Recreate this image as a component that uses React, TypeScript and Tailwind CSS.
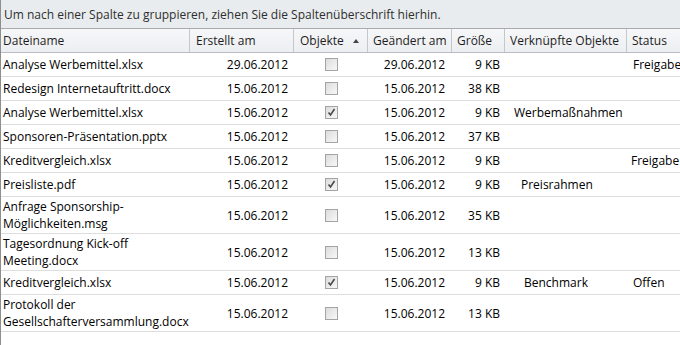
import React from 'react';

type Row = {
  name: string[];
  created: string;
  checked: boolean;
  changed: string;
  size: string;
  linked?: string;
  linkedPad?: string;
  status?: string;
  statusPad?: string;
};

const rows: Row[] = [
  { name: ['Analyse Werbemittel.xlsx'], created: '29.06.2012', checked: false, changed: '29.06.2012', size: '9 KB', status: 'Freigabe', statusPad: 'pl-[6px]' },
  { name: ['Redesign Internetauftritt.docx'], created: '15.06.2012', checked: false, changed: '15.06.2012', size: '38 KB' },
  { name: ['Analyse Werbemittel.xlsx'], created: '15.06.2012', checked: true, changed: '15.06.2012', size: '9 KB', linked: 'Werbemaßnahmen', linkedPad: 'pl-[9px]' },
  { name: ['Sponsoren-Präsentation.pptx'], created: '15.06.2012', checked: false, changed: '15.06.2012', size: '37 KB' },
  { name: ['Kreditvergleich.xlsx'], created: '15.06.2012', checked: false, changed: '15.06.2012', size: '9 KB', status: 'Freigabe', statusPad: 'pl-[4px]' },
  { name: ['Preisliste.pdf'], created: '15.06.2012', checked: true, changed: '15.06.2012', size: '9 KB', linked: 'Preisrahmen', linkedPad: 'pl-[16px]' },
  { name: ['Anfrage Sponsorship-', 'Möglichkeiten.msg'], created: '15.06.2012', checked: false, changed: '15.06.2012', size: '35 KB' },
  { name: ['Tagesordnung Kick-off', 'Meeting.docx'], created: '15.06.2012', checked: false, changed: '15.06.2012', size: '13 KB' },
  { name: ['Kreditvergleich.xlsx'], created: '15.06.2012', checked: true, changed: '15.06.2012', size: '9 KB', linked: 'Benchmark', linkedPad: 'pl-[19px]', status: 'Offen', statusPad: 'pl-[6px]' },
  { name: ['Protokoll der', 'Gesellschafterversammlung.docx'], created: '15.06.2012', checked: false, changed: '15.06.2012', size: '13 KB' },
];

const cols = 'grid grid-cols-[189px_104px_74px_84px_53px_122px_1fr]';

function CheckBox({ checked }: { checked: boolean }) {
  return (
    <div className="w-[13px] h-[13px] border border-[#a4a4a4] bg-gradient-to-br from-[#dcdcdc] to-[#f8f8f8] flex items-center justify-center">
      {checked && (
        <svg width="9" height="9" viewBox="0 0 9 9">
          <path d="M1.5 4.5 L3.5 7 L7.5 1" fill="none" stroke="#4a4a4a" strokeWidth="1.6" />
        </svg>
      )}
    </div>
  );
}

export default function App() {
  return (
    <div
      className="w-[680px] h-[345px] overflow-hidden bg-white border-l border-[#8e8e8e] text-[12px] leading-[15px] text-black"
      style={{ fontFamily: '"Open Sans", "Noto Sans", sans-serif' }}
    >
      {/* group panel */}
      <div className="h-[29px] bg-[#e9ecef] border-b border-[#a7abb0] flex items-center pl-[3px] text-[#2e2e2e]">
        Um nach einer Spalte zu gruppieren, ziehen Sie die Spaltenüberschrift hierhin.
      </div>

      {/* header */}
      <div className={`${cols} h-[24px] bg-gradient-to-b from-[#f6f7f9] to-[#eceef1] border-b border-[#b9bdc3] text-[#1e1e1e]`}>
        <div className="border-r border-[#c4c8cd] flex items-center pl-[2px]">Dateiname</div>
        <div className="border-r border-[#c4c8cd] flex items-center pl-[6px]">Erstellt am</div>
        <div className="border-r border-[#c4c8cd] flex items-center pl-[6px] justify-between pr-[8px]">
          <span>Objekte</span>
          <svg width="6" height="4" viewBox="0 0 6 4">
            <path d="M0 4 L3 0 L6 4 Z" fill="#444" />
          </svg>
        </div>
        <div className="border-r border-[#c4c8cd] flex items-center pl-[5px] whitespace-nowrap">Geändert am</div>
        <div className="border-r border-[#c4c8cd] flex items-center pl-[5px]">Größe</div>
        <div className="border-r border-[#c4c8cd] flex items-center pl-[5px] whitespace-nowrap">Verknüpfte Objekte</div>
        <div className="flex items-center pl-[5px]">Status</div>
      </div>

      {/* rows */}
      {rows.map((r, i) => (
        <div key={i} className={`${cols} min-h-[24px] border-b border-[#dedede]`}>
          <div className="py-[1px] pl-[2px] flex flex-col justify-center leading-[17px]">
            {r.name.map((n, j) => (
              <span key={j}>{n}</span>
            ))}
          </div>
          <div className="flex items-center justify-end pr-[6px]">{r.created}</div>
          <div className="flex items-center pl-[31px]">
            <CheckBox checked={r.checked} />
          </div>
          <div className="flex items-center justify-end pr-[7px]">{r.changed}</div>
          <div className="flex items-center justify-end pr-[5px]">{r.size}</div>
          <div className={`flex items-center ${r.linkedPad ?? ''}`}>{r.linked}</div>
          <div className={`flex items-center whitespace-nowrap ${r.statusPad ?? ''}`}>{r.status}</div>
        </div>
      ))}
    </div>
  );
}
